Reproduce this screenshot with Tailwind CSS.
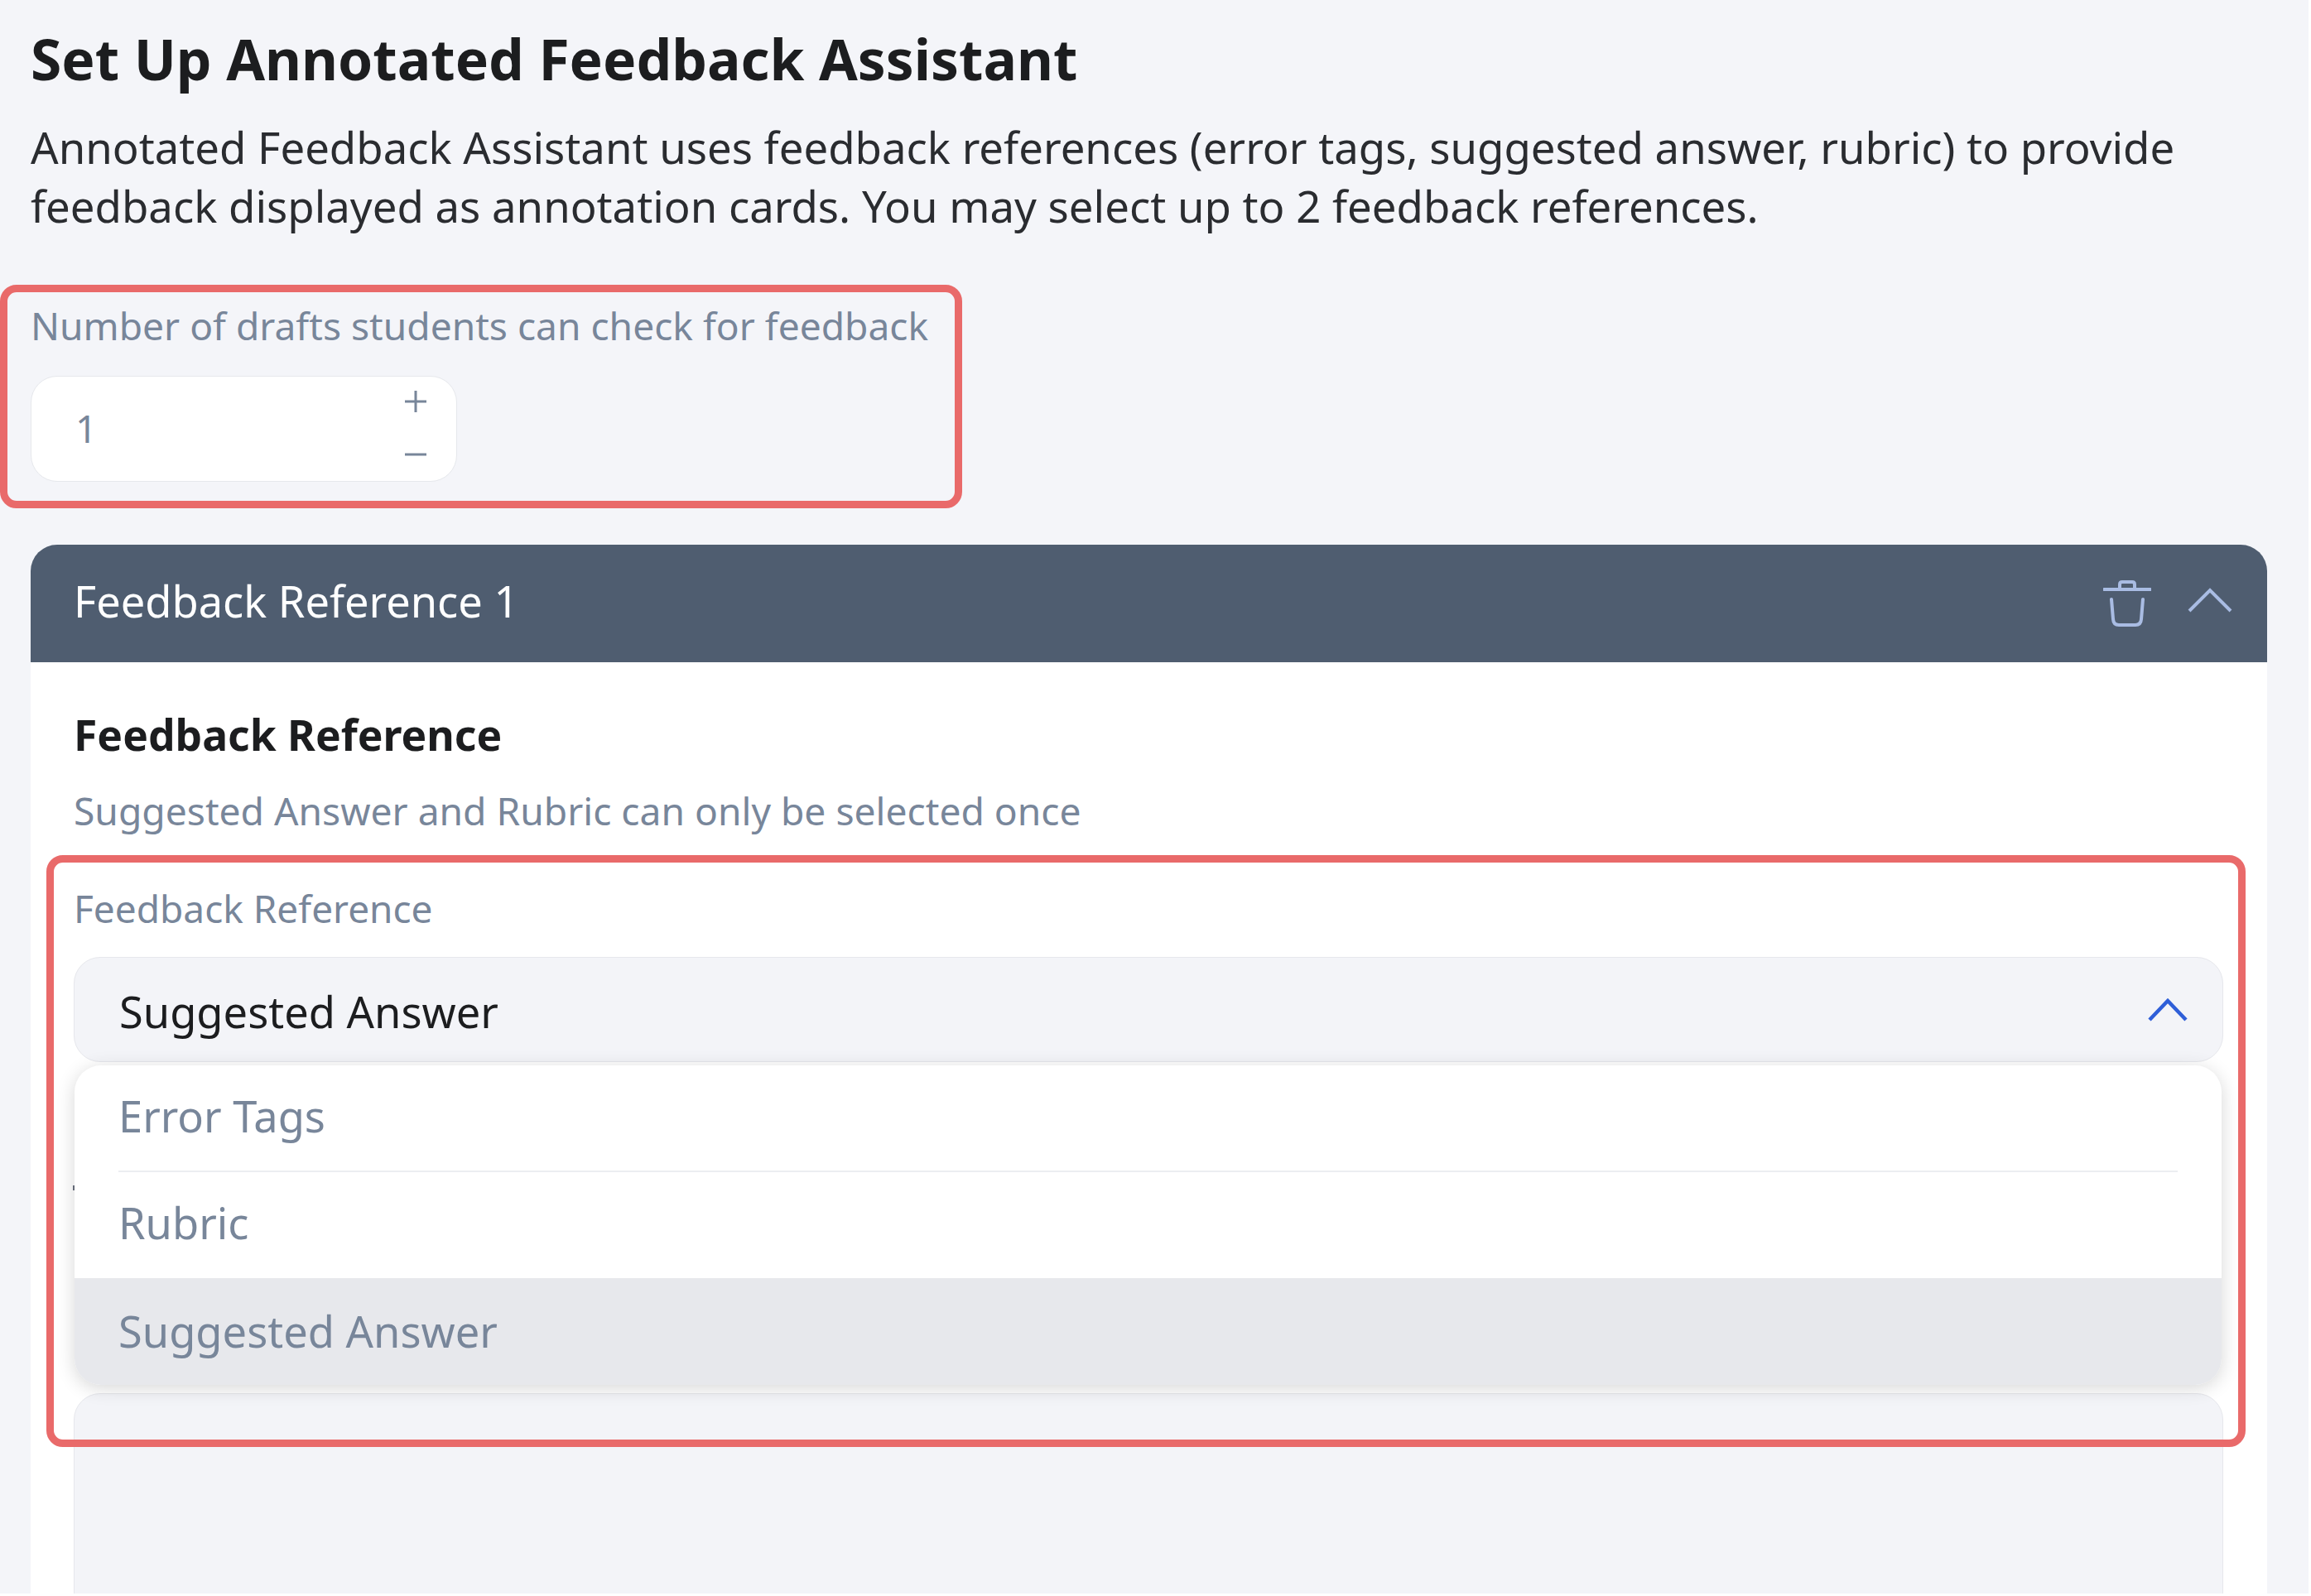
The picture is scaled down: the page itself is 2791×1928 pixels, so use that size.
<!DOCTYPE html>
<html lang="en">
<head>
    <meta charset="UTF-8">
    <title>Set Up Annotated Feedback Assistant</title>
    <script src="https://cdn.jsdelivr.net/npm/@tailwindcss/browser@4"></script>
</head>
<body class="bg-white font-['Noto_Sans',sans-serif] overflow-hidden">
    <div class="w-[2788px] h-[1925px] bg-[#f4f5f9] pl-[37px] pt-[27px] overflow-hidden">
        <h1 class="text-[67.7px] leading-[88px] font-bold text-[#1c1d1f]">Set Up Annotated Feedback Assistant</h1>
        <p class="mt-[27px] w-[2680px] text-[52.7px] leading-[71px] text-[#2a2c30]">Annotated Feedback Assistant uses feedback references (error tags, suggested answer, rubric) to provide feedback displayed as annotation cards. You may select up to 2 feedback references.</p>

        <!-- drafts field -->
        <div class="relative mt-[60px] w-[1100px] h-[270px]">
            <div class="absolute left-[-37px] top-0 w-[1162px] h-[270px] border-[9px] border-[#e96a6a] rounded-[20px]"></div>
            <div class="pt-[21px] text-[46.15px] leading-[58px] text-[#78869a]">Number of drafts students can check for feedback</div>
            <div class="mt-[31px] w-[515px] h-[128px] bg-white border border-[#e6e8ec] rounded-[32px] pl-[53px] pr-[35px] flex items-center justify-between">
                <span class="mb-[2px] text-[46px] text-[#78869a]">1</span>
                <div class="flex flex-col items-center gap-[36px] mb-[2px] text-[#78869a]">
                    <svg class="w-[28px] h-[28px]" viewBox="0 0 28 28" fill="none" stroke="currentColor" stroke-width="3"><path d="M14 1v26M1 14h26"/></svg>
                    <svg class="w-[28px] h-[28px]" viewBox="0 0 28 28" fill="none" stroke="currentColor" stroke-width="3"><path d="M1 14h26"/></svg>
                </div>
            </div>
        </div>

        <!-- reference card -->
        <div class="mt-[44px] w-[2701px]">
            <div class="h-[142px] bg-[#4f5d70] rounded-t-[32px] pl-[52px] pr-[42px] flex items-center justify-between">
                <span class="mb-[6px] text-[52.4px] text-white">Feedback Reference 1</span>
                <div class="flex items-center gap-[44px] text-[#a9bce3]">
                    <svg class="w-[58px] h-[58px]" viewBox="0 0 58 58" fill="none" stroke="currentColor" stroke-width="4" stroke-linecap="round" stroke-linejoin="round"><path d="M1 12h56M20 11V6q0-3 3-3h12q3 0 3 3v5M10 24l2 24q.5 7 7 7h20q6.5 0 7-7l2-24"/></svg>
                    <svg class="w-[54px] h-[30px] mb-[8px]" viewBox="0 0 54 30" fill="none" stroke="currentColor" stroke-width="4"><path d="M2 28L27 3l25 25"/></svg>
                </div>
            </div>
            <div class="relative h-[1200px] bg-white pl-[52px] pr-[53px]">
                <h2 class="pt-[53px] text-[51.6px] leading-[68px] font-bold text-[#1c1d1f]">Feedback Reference</h2>
                <p class="mt-[30px] text-[46.2px] leading-[58px] text-[#78869a]">Suggested Answer and Rubric can only be selected once</p>
                <div class="mt-[59px] text-[46px] leading-[58px] text-[#78869a]">Feedback Reference</div>
                <div class="mt-[30px] h-[127px] bg-[#f3f4f8] border border-[#e6e7ec] rounded-[32px] pl-[54px] pr-[42px] flex items-center justify-between">
                    <span class="mt-[6px] text-[52.4px] text-[#1c1d1f]">Suggested Answer</span>
                    <svg class="w-[48px] h-[28px] text-[#2f5fd8]" viewBox="0 0 48 28" fill="none" stroke="currentColor" stroke-width="4.5"><path d="M2 26L24 3l22 23"/></svg>
                </div>

                <!-- sliver of whatever sits under the dropdown -->
                <div class="absolute left-[51px] top-[632px] w-[2px] h-[6px] bg-[#6b7280]"></div>

                <!-- open dropdown -->
                <div class="relative z-10 mt-[4px] ml-[1px] mr-[2px] bg-white rounded-[32px] overflow-hidden shadow-[0_4px_22px_rgba(0,0,0,0.16)]">
                    <div class="mx-[53px] h-[129px] pb-[4px] border-b-2 border-[#eceef1] flex items-center text-[52.4px] text-[#78869a]">Error Tags</div>
                    <div class="px-[53px] h-[128px] pb-[6px] flex items-center text-[52.4px] text-[#78869a]">Rubric</div>
                    <div class="px-[53px] h-[129px] bg-[#e7e8ec] flex items-center text-[52.4px] text-[#78869a]">Suggested Answer</div>
                </div>
                <div class="mt-[10px] h-[400px] bg-[#f3f4f8] border border-[#e6e7ec] rounded-[32px]"></div>

                <!-- highlight round the select -->
                <div class="absolute z-20 left-[19px] top-[233px] w-[2656px] h-[715px] border-[9px] border-[#e96a6a] rounded-[20px]"></div>
            </div>
        </div>
    </div>
</body>
</html>
